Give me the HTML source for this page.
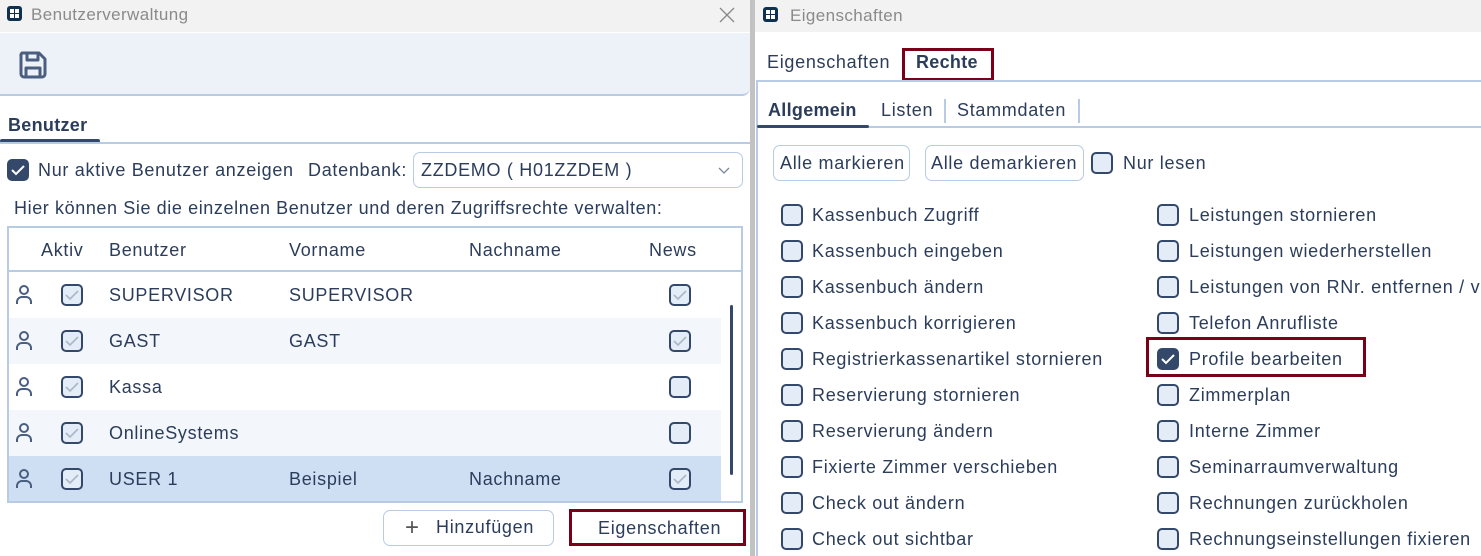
<!DOCTYPE html>
<html><head><meta charset="utf-8"><style>
*{box-sizing:border-box;margin:0;padding:0}
body{width:1481px;height:556px;overflow:hidden;background:#fff;font-family:"Liberation Sans",sans-serif;color:#2b3d5b;font-size:18px;letter-spacing:0.7px;position:relative}
.a{position:absolute;white-space:nowrap}
.cb{position:absolute;width:22px;height:22px;border:2px solid #34496a;border-radius:5px;background:#e3ecf7}
.cb.on{background:#34496a}
.red{position:absolute;border:3px solid #7a0019}
</style></head><body>
<div class="a" style="left:0;top:0;width:750px;height:32px;background:#f2f2f2"></div>
<div class="a" style="left:7px;top:6px;width:15px;height:15px;background:#10304f;border-radius:3px"><div style="position:absolute;left:3px;top:3px;width:4px;height:4px;background:#fff"></div><div style="position:absolute;left:8px;top:3px;width:4px;height:4px;background:#fff"></div><div style="position:absolute;left:3px;top:8px;width:4px;height:4px;background:#fff"></div><div style="position:absolute;left:8px;top:8px;width:4px;height:4px;background:#fff"></div></div>
<div class="a" style="left:31px;top:5px;color:#8a8a8a;font-size:17px;letter-spacing:0.4px">Benutzerverwaltung</div>
<svg class="a" style="left:718px;top:6px" width="18" height="18"><path d="M2 2l14 14M16 2L2 16" stroke="#888" stroke-width="1.3"/></svg>
<div class="a" style="left:0;top:33px;width:750px;height:63px;background:#edf1f8;border-bottom:2px solid #b8cbe4;border-radius:0 0 8px 0"></div>
<svg class="a" style="left:17px;top:49px" width="32" height="32" viewBox="0 0 32 32"><path d="M5 4h17l6 6v15a3 3 0 0 1-3 3H7a3 3 0 0 1-3-3V7a3 3 0 0 1 1-3z M10 4v7h11V4 M9 28v-9h14v9" fill="none" stroke="#4a5f80" stroke-width="3" stroke-linejoin="round"/></svg>
<div class="a" style="left:8px;top:115px;font-weight:bold;font-size:18px;letter-spacing:0.3px">Benutzer</div>
<div class="a" style="left:0;top:139px;width:100px;height:4px;background:#34496a;border-radius:2px"></div>
<div class="a" style="left:0;top:142px;width:750px;height:2px;background:#b8cbe4"></div>
<div class="cb on" style="left:7px;top:159px"><svg width="18" height="18"><path d="M3 9l4 4 8-8" fill="none" stroke="#fff" stroke-width="2"/></svg></div>
<div class="a" style="left:38px;top:160px">Nur aktive Benutzer anzeigen</div>
<div class="a" style="left:308px;top:160px">Datenbank:</div>
<div class="a" style="left:413px;top:152px;width:330px;height:36px;border:1px solid #b8cbe4;border-radius:7px"></div>
<div class="a" style="left:421px;top:160px">ZZDEMO  ( H01ZZDEM )</div>
<svg class="a" style="left:717px;top:165px" width="14" height="10"><path d="M2 3l5 5 5-5" fill="none" stroke="#7a8699" stroke-width="1.3"/></svg>
<div class="a" style="left:14px;top:198px;letter-spacing:0.6px">Hier können Sie die einzelnen Benutzer und deren Zugriffsrechte verwalten:</div>
<div class="a" style="left:7px;top:226px;width:736px;height:277px;border:2px solid #b8cbe4"></div>
<div class="a" style="left:9px;top:270px;width:732px;height:2px;background:#b8cbe4"></div>
<div class="a" style="left:41px;top:240px">Aktiv</div>
<div class="a" style="left:109px;top:240px">Benutzer</div>
<div class="a" style="left:289px;top:240px">Vorname</div>
<div class="a" style="left:469px;top:240px">Nachname</div>
<div class="a" style="left:649px;top:240px">News</div>
<div class="a" style="left:9px;top:318px;width:712px;height:46px;background:#f3f6fb"></div>
<div class="a" style="left:9px;top:410px;width:712px;height:46px;background:#f3f6fb"></div>
<div class="a" style="left:9px;top:456px;width:712px;height:45px;background:#cfdff3"></div>
<div class="a" style="left:730px;top:305px;width:3px;height:170px;background:#34496a;border-radius:2px"></div>
<div id="rows"></div>
<div class="a" style="left:383px;top:510px;width:171px;height:36px;border:1px solid #b8cbe4;border-radius:7px"></div>
<div class="a" style="left:405px;top:514px;font-size:24px;color:#555">+</div>
<div class="a" style="left:436px;top:517px">Hinzufügen</div>
<div class="red" style="left:569px;top:509px;width:177px;height:37px"></div>
<div class="a" style="left:598px;top:518px">Eigenschaften</div>
<div class="a" style="left:750px;top:0;width:5px;height:556px;background:#c2c2c2"></div>
<div class="a" style="left:755px;top:0;width:726px;height:32px;background:#f2f2f2"></div>
<div class="a" style="left:763px;top:7px;width:15px;height:15px;background:#10304f;border-radius:3px"><div style="position:absolute;left:3px;top:3px;width:4px;height:4px;background:#fff"></div><div style="position:absolute;left:8px;top:3px;width:4px;height:4px;background:#fff"></div><div style="position:absolute;left:3px;top:8px;width:4px;height:4px;background:#fff"></div><div style="position:absolute;left:8px;top:8px;width:4px;height:4px;background:#fff"></div></div>
<div class="a" style="left:790px;top:6px;color:#8a8a8a;font-size:17px;letter-spacing:0.4px">Eigenschaften</div>
<div class="a" style="left:767px;top:52px">Eigenschaften</div>
<div class="red" style="left:902px;top:48px;width:92px;height:33px"></div>
<div class="a" style="left:916px;top:52px;font-weight:bold;letter-spacing:0.3px">Rechte</div>
<div class="a" style="left:756px;top:80px;width:725px;height:2px;background:#b8cbe4"></div>
<div class="a" style="left:756px;top:80px;width:2px;height:476px;background:#b8cbe4"></div>
<div class="a" style="left:768px;top:100px;font-weight:bold;letter-spacing:0.3px">Allgemein</div>
<div class="a" style="left:881px;top:100px">Listen</div>
<div class="a" style="left:944px;top:99px;width:2px;height:24px;background:#b8cbe4"></div>
<div class="a" style="left:957px;top:100px">Stammdaten</div>
<div class="a" style="left:1078px;top:99px;width:2px;height:24px;background:#b8cbe4"></div>
<div class="a" style="left:757px;top:126px;width:724px;height:2px;background:#b8cbe4"></div>
<div class="a" style="left:757px;top:125px;width:112px;height:3px;background:#34496a;border-radius:2px"></div>
<div class="a" style="left:773px;top:145px;width:137px;height:36px;border:1px solid #b8cbe4;border-radius:7px"></div>
<div class="a" style="left:780px;top:153px">Alle markieren</div>
<div class="a" style="left:925px;top:145px;width:159px;height:36px;border:1px solid #b8cbe4;border-radius:7px"></div>
<div class="a" style="left:931px;top:153px">Alle demarkieren</div>
<div class="cb" style="left:1091px;top:152px"></div>
<div class="a" style="left:1123px;top:153px">Nur lesen</div>
<div class="red" style="left:1146px;top:337px;width:220px;height:40px"></div>
<div id="rights"></div>
<script>
var rows=[["SUPERVISOR","SUPERVISOR","",1],["GAST","GAST","",1],["Kassa","","",0],["OnlineSystems","","",0],["USER 1","Beispiel","Nachname",1]];
var h="",chk='<svg width="18" height="18"><path d="M3 9l4 4 8-8" fill="none" stroke="#a9b6c8" stroke-width="1.6"/></svg>';
rows.forEach(function(r,i){var y=272+i*46;
h+='<svg class="a" style="left:14px;top:'+(y+12)+'px" width="20" height="22"><circle cx="10" cy="6" r="4" fill="none" stroke="#4a5f80" stroke-width="2"/><path d="M3 20v-2a5 5 0 0 1 5-5h4a5 5 0 0 1 5 5v2" fill="none" stroke="#4a5f80" stroke-width="2"/></svg>';
h+='<div class="cb" style="left:61px;top:'+(y+12)+'px">'+chk+'</div>';
h+='<div class="a" style="left:109px;top:'+(y+13)+'px">'+r[0]+'</div>';
h+='<div class="a" style="left:289px;top:'+(y+13)+'px">'+r[1]+'</div>';
h+='<div class="a" style="left:469px;top:'+(y+13)+'px">'+r[2]+'</div>';
h+='<div class="cb" style="left:669px;top:'+(y+12)+'px">'+(r[3]?chk:'')+'</div>';});
document.getElementById("rows").innerHTML=h;
var L=["Kassenbuch Zugriff","Kassenbuch eingeben","Kassenbuch ändern","Kassenbuch korrigieren","Registrierkassenartikel stornieren","Reservierung stornieren","Reservierung ändern","Fixierte Zimmer verschieben","Check out ändern","Check out sichtbar"];
var R=["Leistungen stornieren","Leistungen wiederherstellen","Leistungen von RNr. entfernen / ver","Telefon Anrufliste","Profile bearbeiten","Zimmerplan","Interne Zimmer","Seminarraumverwaltung","Rechnungen zurückholen","Rechnungseinstellungen fixieren"];
h="";
for(var i=0;i<10;i++){var y=204+i*36;
h+='<div class="cb" style="left:781px;top:'+y+'px"></div><div class="a" style="left:812px;top:'+(y+1)+'px">'+L[i]+'</div>';
h+='<div class="cb'+(i==4?' on':'')+'" style="left:1157px;top:'+y+'px">'+(i==4?'<svg width="18" height="18"><path d="M3 9l4 4 8-8" fill="none" stroke="#fff" stroke-width="2"/></svg>':'')+'</div><div class="a" style="left:1189px;top:'+(y+1)+'px">'+R[i]+'</div>';}
document.getElementById("rights").innerHTML=h;
</script>
</body></html>
